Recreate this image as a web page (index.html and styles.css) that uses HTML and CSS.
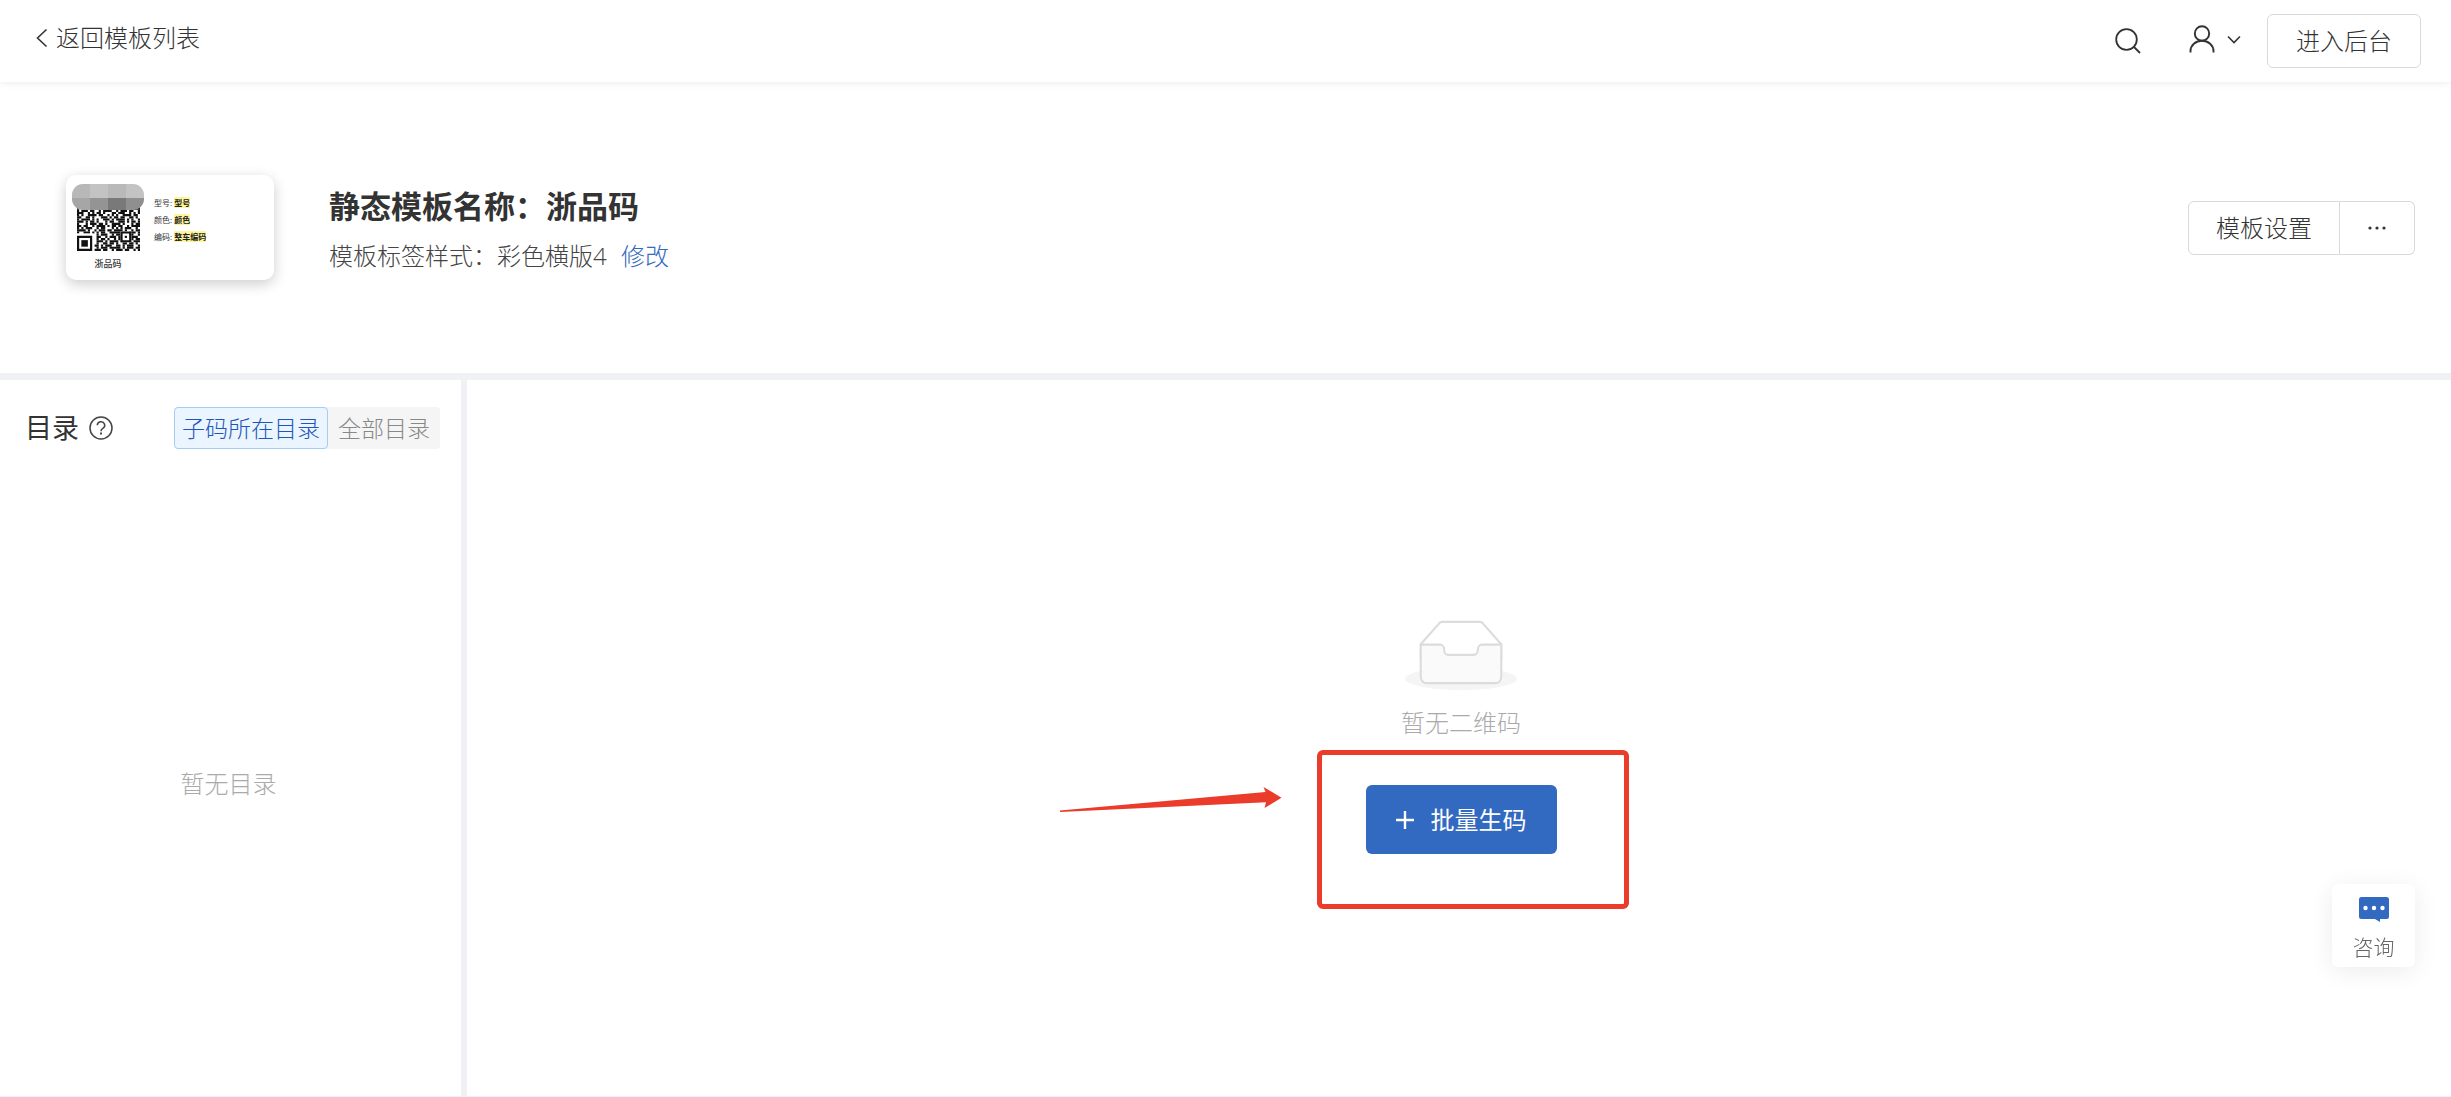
FILE: index.html
```html
<!DOCTYPE html>
<html lang="zh-CN">
<head>
<meta charset="utf-8">
<meta name="viewport" content="width=device-width, initial-scale=1">
<title>静态模板</title>
<link rel="stylesheet" href="styles.css">
</head>
<body>
<header class="topbar">
  <a class="back" href="#">
    <svg width="12" height="20" viewBox="0 0 12 20" fill="none" stroke="currentColor" stroke-width="1.6"><path d="M10.500 1.500 1.500 10l9 8.500"/></svg>
    <span>返回模板列表</span>
  </a>
  <div class="tools">
    <button class="icon-button" type="button" aria-label="搜索">
      <svg width="26" height="26" viewBox="0 0 26 26" fill="none" stroke="currentColor" stroke-width="1.8"><circle cx="11.500" cy="11.500" r="10.300"/><path d="m18.500 18.500 6.500 6.500"/></svg>
    </button>
    <button class="icon-button account" type="button" aria-label="账户">
      <svg width="26" height="28" viewBox="0 0 26 28" fill="none" stroke="currentColor" stroke-width="1.9"><circle cx="13" cy="8.500" r="7.200"/><path d="M1.500 27.500V26a11.500 10.300 0 0 1 23 0v1.500"/></svg>
      <svg width="14" height="9" viewBox="0 0 14 9" fill="none" stroke="currentColor" stroke-width="1.6"><path d="m1 1.500 6 6 6-6"/></svg>
    </button>
    <button class="button" type="button">进入后台</button>
  </div>
</header>

<section class="summary">
  <div class="label-card">
    <div class="label-code">
      <svg class="qr" viewBox="0 0 29 29" stroke="#111" fill="none" aria-hidden="true">
        <path d="M0 8.500h29" stroke-dasharray="2 1 1 2 3 1 1 1 2 1 4 1 1 1"/>
        <path d="M0 9.500h29" stroke-dasharray="1 2 2 1 1 1 3 2 1 1 1 2"/>
        <path d="M0 10.500h29" stroke-dasharray="1 1 3 1 2 2 1 1 4 2"/>
        <path d="M0 11.500h29" stroke-dasharray="3 2 1 1 1 1 2 1 1 3 2 1"/>
        <path d="M0 12.500h29" stroke-dasharray="1 1 1 2 4 1 2 2 1 1"/>
        <path d="M0 13.500h29" stroke-dasharray="2 2 2 1 1 3 3 1 1 1 2 1"/>
        <path d="M0 14.500h29" stroke-dasharray="1 1 4 1 1 1 1 2 3 1"/>
        <path d="M0 15.500h29" stroke-dasharray="3 1 1 1 2 1 1 3 1 1 2 2"/>
        <path d="M0 16.500h29" stroke-dasharray="1 3 1 1 3 1 2 1 1 2 4 1"/>
        <path d="M0 17.500h29" stroke-dasharray="2 1 2 2 1 1 4 1 1 1"/>
        <path d="M0 18.500h29" stroke-dasharray="1 1 1 1 3 2 1 1 2 3 1 1"/>
        <path d="M0 19.500h29" stroke-dasharray="4 1 1 2 1 1 3 1 2 1"/>
        <path d="M0 20.500h29" stroke-dasharray="1 2 3 1 1 1 1 1 2 2 5 1"/>
        <path d="M9 21.500h20" stroke-dasharray="1 1 3 2 1 1 2 1"/>
        <path d="M9 22.500h20" stroke-dasharray="2 2 1 1 3 1"/>
        <path d="M9 23.500h20" stroke-dasharray="1 1 2 1 1 2"/>
        <path d="M9 24.500h20" stroke-dasharray="3 1 1 1 4 1"/>
        <path d="M9 25.500h20" stroke-dasharray="1 2 2 1 2 1"/>
        <path d="M8 26.500h21" stroke-dasharray="2 1 1 1 3 2"/>
        <path d="M9 27.500h20" stroke-dasharray="1 1 3 1 5 1"/>
        <path d="M8 28.500h21" stroke-dasharray="3 1 2 2 1 1"/>
        <path d="M0 21h8v8H0z" fill="#fff" stroke="none"/>
        <path d="M.5 22.500h6v6h-6z"/><path d="M2 24h3v3H2z" fill="#111" stroke="none"/>
        <path d="M20 20h5v5h-5z" fill="#fff" stroke="none"/><path d="M20.500 20.500h4v4h-4z"/><path d="M22 22h1v1h-1z" fill="#111" stroke="none"/>
      </svg>
      <svg class="mask" viewBox="0 0 72 26" aria-hidden="true">
        <clipPath id="maskShape"><rect width="72" height="26" rx="11"/></clipPath>
        <g clip-path="url(#maskShape)">
          <path fill="#b8b8b8" d="M0 0h18v14H0z"/><path fill="#c3c3c3" d="M18 0h18v14H18z"/><path fill="#b9b9b9" d="M36 0h18v14H36z"/><path fill="#c3c3c3" d="M54 0h18v14H54z"/>
          <path fill="#a6a6a6" d="M0 14h18v12H0z"/><path fill="#949494" d="M18 14h18v12H18z"/><path fill="#797979" d="M36 14h18v12H36z"/><path fill="#8f8f8f" d="M54 14h18v12H54z"/>
        </g>
      </svg>
      <span class="label-name">浙品码</span>
    </div>
    <div class="label-fields">
      <div>型号: <mark>型号</mark></div>
      <div>颜色: <mark>颜色</mark></div>
      <div>编码: <mark>整车编码</mark></div>
    </div>
  </div>
  <div class="heading">
    <h1>静态模板名称：浙品码</h1>
    <p>模板标签样式：彩色横版4 <a href="#">修改</a></p>
  </div>
  <div class="button-group">
    <button class="button" type="button">模板设置</button>
    <button class="button more" type="button" aria-label="更多">
      <svg width="18" height="4" viewBox="0 0 18 4" fill="currentColor"><circle cx="2" cy="2" r="1.600"/><circle cx="9" cy="2" r="1.600"/><circle cx="16" cy="2" r="1.600"/></svg>
    </button>
  </div>
</section>

<main class="workspace">
  <aside class="sidebar">
    <div class="sidebar-head">
      <h2>目录</h2>
      <svg class="help" width="24" height="24" viewBox="0 0 24 24" fill="none" stroke="currentColor" stroke-width="1.500"><circle cx="12" cy="12" r="11"/><path d="M8.300 9.300a3.700 3.500 0 1 1 5.500 3c-1.300.8-1.800 1.300-1.800 2.900"/><path d="M12 16.600v2" stroke-width="1.900"/></svg>
      <div class="switch">
        <button class="active" type="button" aria-pressed="true">子码所在目录</button>
        <button type="button" aria-pressed="false">全部目录</button>
      </div>
    </div>
    <p class="sidebar-empty">暂无目录</p>
  </aside>
  <section class="content">
    <svg width="112" height="72" viewBox="0 0 64 41" aria-hidden="true">
      <g transform="translate(0 1)">
        <ellipse cx="32" cy="32.500" rx="32" ry="6.500" fill="#f5f5f5"/>
        <g stroke="#dcdcdc" stroke-width="1.200">
          <path fill="#fff" d="M55 12.760L44.854 1.258C44.367.474 43.656 0 42.907 0H21.093c-.749 0-1.460.474-1.947 1.257L9 12.761V22h46v-9.240z"/>
          <path fill="#fafafa" d="M41.613 15.931c0-1.605.994-2.930 2.227-2.931H55v18.137C55 33.260 53.680 35 52.050 35h-40.100C10.320 35 9 33.259 9 31.137V13h11.160c1.233 0 2.227 1.323 2.227 2.928v.022c0 1.605 1.005 2.901 2.237 2.901h14.752c1.232 0 2.237-1.308 2.237-2.913v-.007z"/>
        </g>
      </g>
    </svg>
    <p class="empty-text">暂无二维码</p>
    <div class="create">
      <button class="primary" type="button">
        <svg width="18" height="18" viewBox="0 0 18 18" stroke="currentColor" stroke-width="2.400"><path d="M9 0v18M0 9h18"/></svg>
        <span>批量生码</span>
      </button>
      <div class="callout"></div>
      <svg class="arrow" width="222" height="22" viewBox="0 0 222 22" fill="#ea3b2b" aria-hidden="true"><path d="M0 23.500 205.500 5 203.500 0 221.500 10.700 204.500 21 206 15.300 0 25z"/></svg>
    </div>
  </section>
</main>

<button class="consult" type="button">
  <svg width="30" height="25" viewBox="0 0 30 25"><path fill="#3269c1" d="M2.500 0h25A2.500 2.500 0 0 1 30 2.500v17a2.500 2.500 0 0 1-2.500 2.500H21v3l-5-3H2.500A2.500 2.500 0 0 1 0 19.500v-17A2.500 2.500 0 0 1 2.500 0z"/><g fill="#fff"><circle cx="6.500" cy="11" r="2.200"/><circle cx="15" cy="11" r="2.200"/><circle cx="23.500" cy="11" r="2.200"/></g></svg>
  <span>咨询</span>
</button>
</body>
</html>
```
FILE: styles.css
```css
* {
  box-sizing: border-box;
}

body {
  margin: 0;
  min-height: 100vh;
  display: flex;
  flex-direction: column;
  background: #fff;
  color: #333;
  font: 300 24px/36px "Open Sans", "Noto Sans CJK SC", sans-serif;
}

h1, h2, p {
  margin: 0;
}

a {
  color: #3269c1;
  text-decoration: none;
}

button {
  margin: 0;
  font: inherit;
  color: inherit;
  cursor: pointer;
}

svg {
  display: block;
  flex: none;
  overflow: visible;
}

.topbar {
  display: flex;
  align-items: center;
  justify-content: space-between;
  height: 82px;
  padding: 0 30px 0 36px;
  box-shadow: 0 1px 8px rgba(0, 0, 0, 0.08);
}

.back {
  display: flex;
  align-items: center;
  gap: 8px;
  padding-bottom: 6px;
  color: #333;
}

.tools {
  display: flex;
  align-items: center;
}

.icon-button {
  display: flex;
  align-items: center;
  gap: 12px;
  padding: 0;
  border: 0;
  background: none;
}

.account {
  margin: 0 26px 0 48px;
  padding-bottom: 4px;
}

.button {
  height: 54px;
  padding: 0 28px;
  border: 1px solid #d9d9d9;
  border-radius: 6px;
  background: #fff;
  color: #333;
}

.summary {
  display: flex;
  align-items: center;
  height: 291px;
  padding: 0 36px 0 66px;
}

.label-card {
  display: flex;
  gap: 10px;
  width: 208px;
  height: 105px;
  padding: 9px 6px;
  border-radius: 10px;
  box-shadow: 0 4px 14px rgba(0, 0, 0, 0.2);
  font-size: 8px;
  font-weight: 400;
  line-height: 12px;
}

.label-code {
  position: relative;
  display: flex;
  flex-direction: column;
  align-items: center;
  width: 72px;
  padding-top: 4px;
}

.qr {
  width: 63px;
  height: 63px;
}

.mask {
  position: absolute;
  top: 0;
  left: 0;
  width: 72px;
  height: 26px;
}

.label-name {
  margin-top: 7px;
  font-size: 9px;
  font-weight: 500;
}

.label-fields {
  display: flex;
  flex-direction: column;
  gap: 5px;
  padding-top: 13px;
}

mark {
  background: #fff59a;
  color: #222;
  font-weight: 700;
}

.heading {
  flex: 1;
  margin: 0 55px;
}

.heading h1 {
  font-size: 31px;
  line-height: 48px;
  font-weight: 700;
}

.heading p {
  margin-top: 8px;
  color: #444;
}

.heading a {
  margin-left: 8px;
}

.button-group {
  display: flex;
}

.button-group .button:first-child {
  padding: 0 27px;
  border-radius: 6px 0 0 6px;
}

.button-group .more {
  display: flex;
  align-items: center;
  justify-content: center;
  width: 75px;
  border-left: 0;
  border-radius: 0 6px 6px 0;
}

.workspace {
  flex: 1;
  display: flex;
  border-top: 7px solid #f0f1f5;
  border-bottom: 1px solid #f0f1f5;
}

.sidebar {
  display: flex;
  flex-direction: column;
  flex: none;
  width: 467px;
  padding: 27px 21px 0 25px;
  border-right: 6px solid #f0f1f5;
}

.sidebar-head {
  display: flex;
  align-items: center;
}

.sidebar-head h2 {
  font-size: 27px;
  font-weight: 400;
}

.help {
  margin-left: 10px;
  color: #444;
}

.switch {
  display: flex;
  margin-left: auto;
  border-radius: 4px;
  background: #f5f5f5;
  color: #888;
}

.switch button {
  height: 42px;
  padding: 0 10px;
  border: 0;
  background: none;
  font-size: 23px;
  line-height: 32px;
}

.switch .active {
  padding: 0 7px;
  border: 1px solid #a6cdf0;
  border-radius: 4px;
  background: #ebf5ff;
  color: #1f57b8;
}

.sidebar-empty {
  margin: auto;
  padding: 22px 8px 0 0;
  color: #aaa;
}

.content {
  flex: 1;
  display: flex;
  flex-direction: column;
  align-items: center;
  justify-content: center;
  padding: 0 0 2px 4px;
}

.empty-text {
  margin-top: 13px;
  color: #aaa;
}

.create {
  position: relative;
  margin-top: 44px;
}

.primary {
  display: flex;
  align-items: center;
  gap: 17px;
  height: 69px;
  padding: 0 30px;
  border: 0;
  border-radius: 6px;
  background: #3269c1;
  color: #fff;
  font-weight: 400;
}

.callout {
  position: absolute;
  top: -35px;
  left: -49px;
  width: 312px;
  height: 159px;
  border: 5px solid #ea3b2b;
  border-radius: 6px;
  pointer-events: none;
}

.arrow {
  position: absolute;
  top: 2px;
  left: -306px;
}

.consult {
  position: fixed;
  right: 36px;
  bottom: 130px;
  display: flex;
  flex-direction: column;
  align-items: center;
  gap: 10px;
  width: 83px;
  height: 83px;
  padding: 13px 0 0;
  border: 0;
  border-radius: 6px;
  background: #fff;
  box-shadow: 0 4px 24px rgba(0, 0, 0, 0.08);
  color: #666;
  font-size: 21px;
  line-height: 30px;
}
```
